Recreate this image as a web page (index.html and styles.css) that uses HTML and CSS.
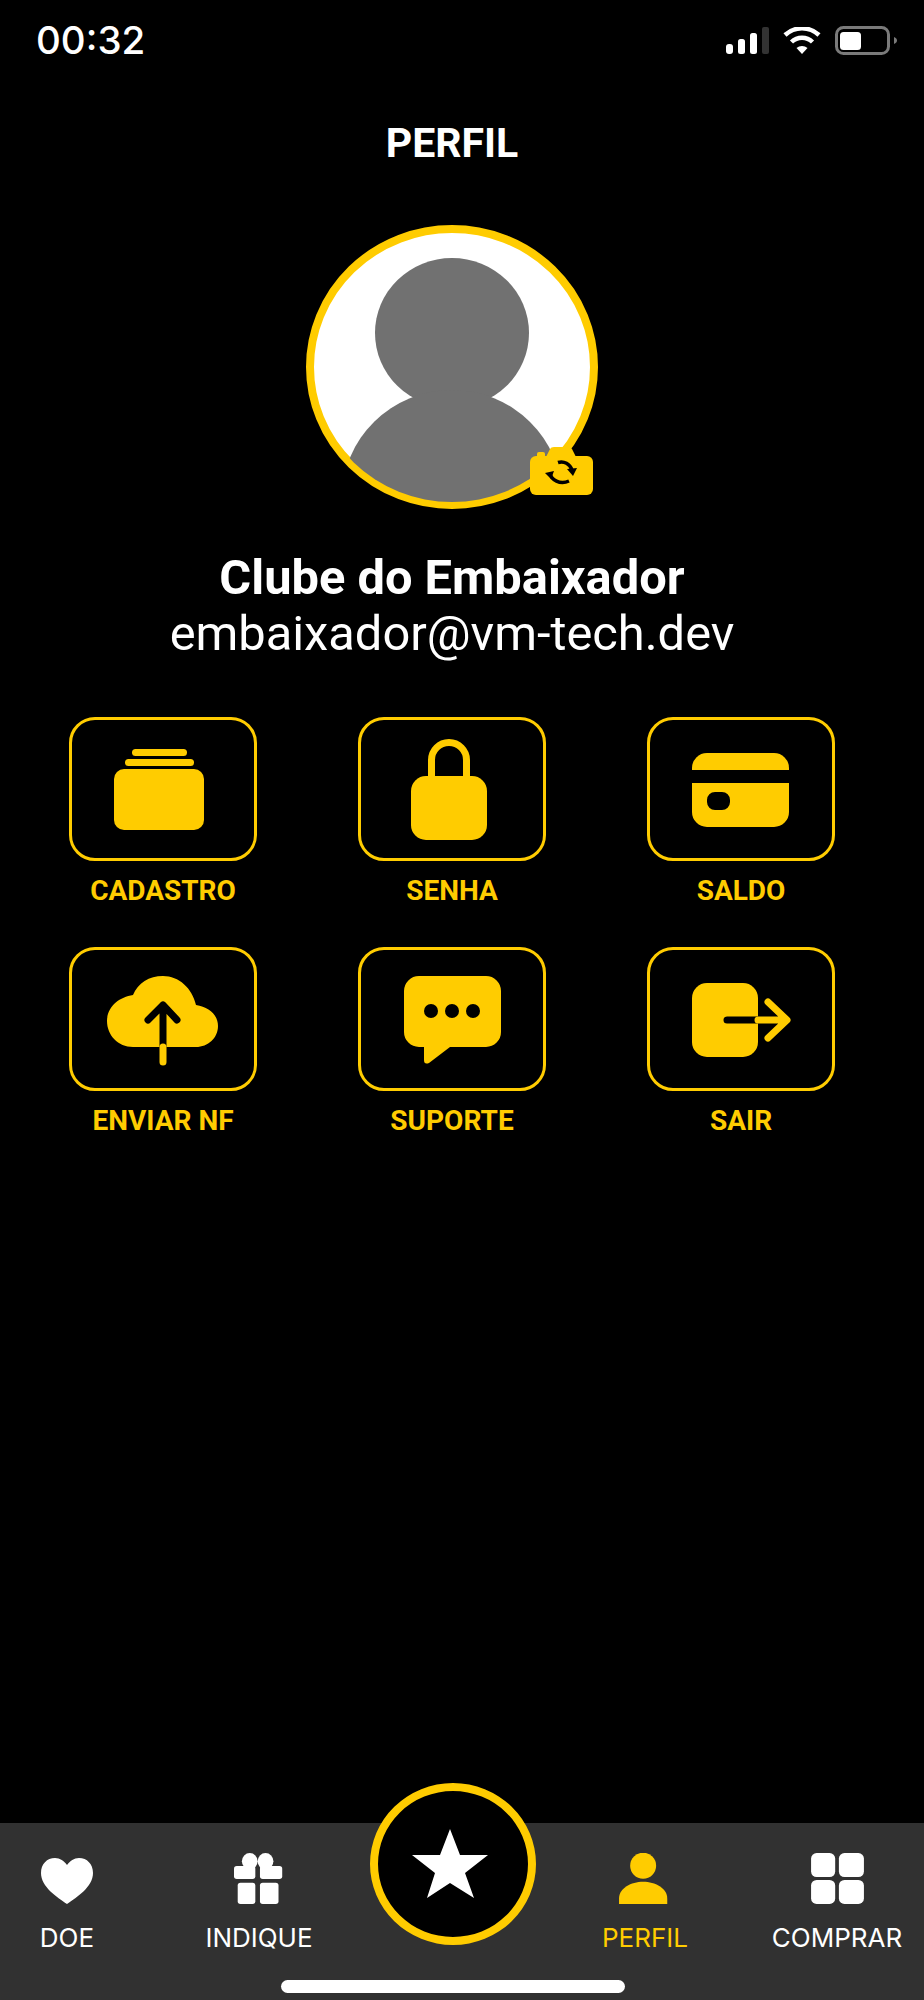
FILE: index.html
```html
<!DOCTYPE html>
<html lang="en">
<head>
  <meta charset="UTF-8" />
  <meta name="viewport" content="width=device-width, initial-scale=1.0" />
  <title>Perfil</title>
  <link rel="stylesheet" href="styles.css">
</head>
<body>
  <header class="status-bar">
    <span class="time">00:32</span>
    <div class="status-icons">
      <svg width="43" height="27" viewBox="0 0 43 27">
        <rect x="0" y="17" width="7" height="10" rx="3" fill="#fff"/>
        <rect x="12" y="12" width="7" height="15" rx="2.5" fill="#fff"/>
        <rect x="24" y="6" width="7" height="21" rx="2.5" fill="#fff"/>
        <rect x="36" y="0" width="7" height="27" rx="2" fill="#333"/>
      </svg>
      <svg width="38" height="27" viewBox="0 0 38 27">
        <path d="M19 27 L13.5 21 A8.5 8.5 0 0 1 24.5 21 Z" fill="#fff"/>
        <path d="M8.5 15 A15 15 0 0 1 29.5 15" fill="none" stroke="#fff" stroke-width="4.5"/>
        <path d="M2 8 A25 25 0 0 1 36 8" fill="none" stroke="#fff" stroke-width="4.5"/>
      </svg>
      <svg width="62" height="29" viewBox="0 0 62 29">
        <rect x="1.5" y="1.5" width="52" height="26" rx="7" fill="none" stroke="#7a7a7a" stroke-width="3"/>
        <rect x="5" y="6" width="21" height="18" rx="3.5" fill="#fff"/>
        <path d="M59 11 C61 12 62 13 62 14.5 C62 16 61 17 59 18 Z" fill="#7a7a7a"/>
      </svg>
    </div>
  </header>

  <main class="profile">
    <h1 class="page-title">PERFIL</h1>

    <div class="avatar">
      <svg width="292" height="284" viewBox="0 0 292 284">
        <defs>
          <clipPath id="avatarClip"><ellipse cx="146" cy="142" rx="139" ry="135"/></clipPath>
        </defs>
        <ellipse cx="146" cy="142" rx="142" ry="138" fill="#fff" stroke="#ffcc00" stroke-width="8"/>
        <g clip-path="url(#avatarClip)" fill="#717171">
          <ellipse cx="146" cy="108" rx="77" ry="75"/>
          <ellipse cx="146" cy="273" rx="110" ry="108"/>
        </g>
      </svg>
      <svg class="camera" width="64" height="48" viewBox="0 0 64 48">
        <rect x="0" y="9" width="63" height="39" rx="6" fill="#ffcc00"/>
        <path d="M15 12 L20 2 Q21 0 24 0 H38 Q41 0 42 2 L47 12 Z" fill="#ffcc00"/>
        <rect x="7" y="5" width="8" height="8" rx="2" fill="#ffcc00"/>
        <path d="M28 15.5 C34 13.5 40 17 42 23" fill="none" stroke="#000" stroke-width="3.5"/>
        <path d="M37 22 L47 21 L43 29 Z" fill="#000"/>
        <path d="M20 26 C21 33 30 38 39 34" fill="none" stroke="#000" stroke-width="3.5"/>
        <path d="M15 26 L24 24 L21 32 Z" fill="#000"/>
      </svg>
    </div>

    <h2 class="user-name">Clube do Embaixador</h2>
    <p class="user-email">embaixador@vm-tech.dev</p>

    <div class="menu-grid">
      <div class="menu-item">
        <div class="menu-card">
          <svg width="182" height="138" viewBox="0 0 182 138">
            <rect x="60" y="29" width="55" height="7" rx="3.5"/>
            <rect x="53" y="39" width="69" height="7" rx="3.5"/>
            <rect x="42" y="49" width="90" height="61" rx="10"/>
          </svg>
        </div>
        <span class="menu-label">CADASTRO</span>
      </div>
      <div class="menu-item">
        <div class="menu-card">
          <svg width="182" height="138" viewBox="0 0 182 138">
            <path d="M70.5 60 V40 A17.5 17.5 0 0 1 105.5 40 V60" fill="none" stroke="#ffcc00" stroke-width="7"/>
            <rect x="50" y="56" width="76" height="64" rx="15"/>
          </svg>
        </div>
        <span class="menu-label">SENHA</span>
      </div>
      <div class="menu-item">
        <div class="menu-card">
          <svg width="182" height="138" viewBox="0 0 182 138">
            <path d="M42 50 V48 A15 15 0 0 1 57 33 H124 A15 15 0 0 1 139 48 V50 Z"/>
            <path fill-rule="evenodd" d="M42 63 H139 V92 A15 15 0 0 1 124 107 H57 A15 15 0 0 1 42 92 Z M65 72 A8 8 0 0 0 57 80 V82 A8 8 0 0 0 65 90 H72 A8 8 0 0 0 80 82 V80 A8 8 0 0 0 72 72 Z"/>
          </svg>
        </div>
        <span class="menu-label">SALDO</span>
      </div>
      <div class="menu-item">
        <div class="menu-card">
          <svg width="182" height="138" viewBox="0 0 182 138">
            <path d="M61 97 C46 97 35 85 35 71 C35 57 47 47 61 45 C66 33 77 26 91 26 C107 26 120 38 124 55 C137 57 146 65 146 76 C146 88 136 97 124 97 Z"/>
            <path d="M76 70 L91 55 L105 70 M91 55 V97" fill="none" stroke="#000" stroke-width="7" stroke-linecap="round" stroke-linejoin="round"/>
            <path d="M91 97 V112" fill="none" stroke="#ffcc00" stroke-width="7" stroke-linecap="round"/>
          </svg>
        </div>
        <span class="menu-label">ENVIAR NF</span>
      </div>
      <div class="menu-item">
        <div class="menu-card">
          <svg width="182" height="138" viewBox="0 0 182 138">
            <path fill-rule="evenodd" d="M58 26 H125 A15 15 0 0 1 140 41 V82 A15 15 0 0 1 125 97 H89 L68 113 Q63 115 63 110 V97 H58 A15 15 0 0 1 43 82 V41 A15 15 0 0 1 58 26 Z"/>
            <circle cx="70" cy="61" r="7" fill="#000"/>
            <circle cx="91" cy="61" r="7" fill="#000"/>
            <circle cx="112" cy="61" r="7" fill="#000"/>
          </svg>
        </div>
        <span class="menu-label">SUPORTE</span>
      </div>
      <div class="menu-item">
        <div class="menu-card">
          <svg width="182" height="138" viewBox="0 0 182 138">
            <rect x="42" y="33" width="66" height="74" rx="15"/>
            <path d="M77 70 H108" fill="none" stroke="#000" stroke-width="7" stroke-linecap="round"/>
            <path d="M108 70 H136 M118 52 L137 70 L118 88" fill="none" stroke="#ffcc00" stroke-width="7" stroke-linecap="round" stroke-linejoin="round"/>
          </svg>
        </div>
        <span class="menu-label">SAIR</span>
      </div>
    </div>
  </main>

  <nav class="tab-bar">
    <div class="tab-row">
      <div class="tab-group">
        <div class="tab">
          <svg width="52" height="46" viewBox="0 0 52 46" fill="#fff">
            <path d="M26 46 C16 39 0 29 0 15 C0 6 6 0 14 0 C19 0 23 3 26 7 C29 3 33 0 38 0 C46 0 52 6 52 15 C52 29 36 39 26 46 Z"/>
          </svg>
          <span>DOE</span>
        </div>
        <div class="tab">
          <svg width="55" height="55" viewBox="0 0 55 55" fill="#fff">
            <ellipse cx="17" cy="9" rx="8.5" ry="9"/>
            <ellipse cx="34" cy="9" rx="8.5" ry="9"/>
            <rect x="0" y="14" width="23" height="14" rx="3"/>
            <rect x="28" y="14" width="24" height="14" rx="3"/>
            <rect x="4" y="32" width="19" height="23" rx="3"/>
            <rect x="28" y="32" width="20" height="23" rx="3"/>
          </svg>
          <span>INDIQUE</span>
        </div>
      </div>
      <div class="tab-group">
        <div class="tab tab-active">
          <svg width="56" height="55" viewBox="0 0 56 55" fill="#ffcc00">
            <circle cx="26" cy="13.7" r="14"/>
            <path d="M0 55 V49 C0 38 13 31 26 31 C39 31 52 38 52 49 V55 Z"/>
          </svg>
          <span>PERFIL</span>
        </div>
        <div class="tab">
          <svg width="57" height="55" viewBox="0 0 57 55" fill="#fff">
            <rect x="0" y="0" width="26" height="26" rx="6"/>
            <rect x="30" y="0" width="27" height="26" rx="6"/>
            <rect x="0" y="29" width="26" height="26" rx="6"/>
            <rect x="30" y="29" width="27" height="26" rx="6"/>
          </svg>
          <span>COMPRAR</span>
        </div>
      </div>
    </div>

    <div class="star-button">
      <svg width="150" height="146" viewBox="0 0 150 146">
        <polygon fill="#fff" points="72,38 82,64 110,64 87,82 96,107 72,92 49,107 57,82 34,64 62,64"/>
      </svg>
    </div>

    <div class="home-bar"></div>
  </nav>
</body>
</html>
```

FILE: styles.css
```css
body {
  font-family: Roboto, Arial, sans-serif;
  background-color: #000;
  color: #fff;
  margin: 0;
  padding: 0;
  width: 924px;
  height: 2000px;
  display: flex;
  flex-direction: column;
  overflow: hidden;
}

.status-bar {
  height: 80px;
  display: flex;
  align-items: center;
  justify-content: space-between;
  padding: 0 27px 0 36px;
  flex-shrink: 0;
}

.time {
  font-family: Inter, Arial, sans-serif;
  font-size: 38.5px;
  font-weight: 500;
}

.status-icons {
  display: flex;
  align-items: center;
  gap: 14px;
}

.status-icons svg {
  display: block;
}

.profile {
  flex: 1;
  width: 904px;
  display: flex;
  flex-direction: column;
  align-items: center;
}

.page-title {
  font-size: 41px;
  font-weight: 700;
  line-height: 44px;
  margin: 41px 0 60px;
}

.avatar {
  position: relative;
  width: 292px;
  height: 284px;
}

.avatar svg {
  display: block;
}

.camera {
  position: absolute;
  left: 224px;
  top: 222px;
}

.user-name {
  font-size: 48.8px;
  font-weight: 700;
  line-height: 56px;
  margin: 41px 0 0;
}

.user-email {
  font-size: 48.8px;
  font-weight: 400;
  line-height: 56px;
  margin: 0;
}

.menu-grid {
  display: grid;
  grid-template-columns: repeat(3, 188px);
  column-gap: 101px;
  row-gap: 41px;
  margin-top: 55px;
}

.menu-item {
  display: flex;
  flex-direction: column;
  align-items: center;
}

.menu-card {
  width: 188px;
  height: 144px;
  box-sizing: border-box;
  border: 3px solid #ffcc00;
  border-radius: 26px;
}

.menu-card svg {
  display: block;
  fill: #ffcc00;
}

.menu-label {
  color: #ffcc00;
  font-size: 28px;
  font-weight: 700;
  line-height: 30px;
  margin-top: 15px;
}

.tab-bar {
  position: relative;
  height: 177px;
  flex-shrink: 0;
  background-color: #313131;
  display: flex;
  flex-direction: column;
}

.tab-row {
  display: flex;
  justify-content: space-between;
  padding: 30px 22px 0 2px;
}

.tab-group {
  display: flex;
  gap: 62px;
}

.tab {
  width: 130px;
  height: 100px;
  display: flex;
  flex-direction: column;
  align-items: center;
  justify-content: flex-end;
  font-family: Inter, Arial, sans-serif;
  font-size: 26px;
  line-height: 30px;
  color: #fff;
  white-space: nowrap;
}

.tab svg {
  display: block;
  margin-bottom: 19px;
}

.tab-active {
  color: #ffcc00;
}

.star-button {
  position: absolute;
  left: 370px;
  top: -40px;
  width: 166px;
  height: 162px;
  box-sizing: border-box;
  border: 8px solid #ffcc00;
  border-radius: 50%;
  background-color: #000;
}

.star-button svg {
  display: block;
}

.home-bar {
  width: 344px;
  height: 13px;
  border-radius: 7px;
  background-color: #fff;
  margin: 27px 0 0 281px;
}
```
